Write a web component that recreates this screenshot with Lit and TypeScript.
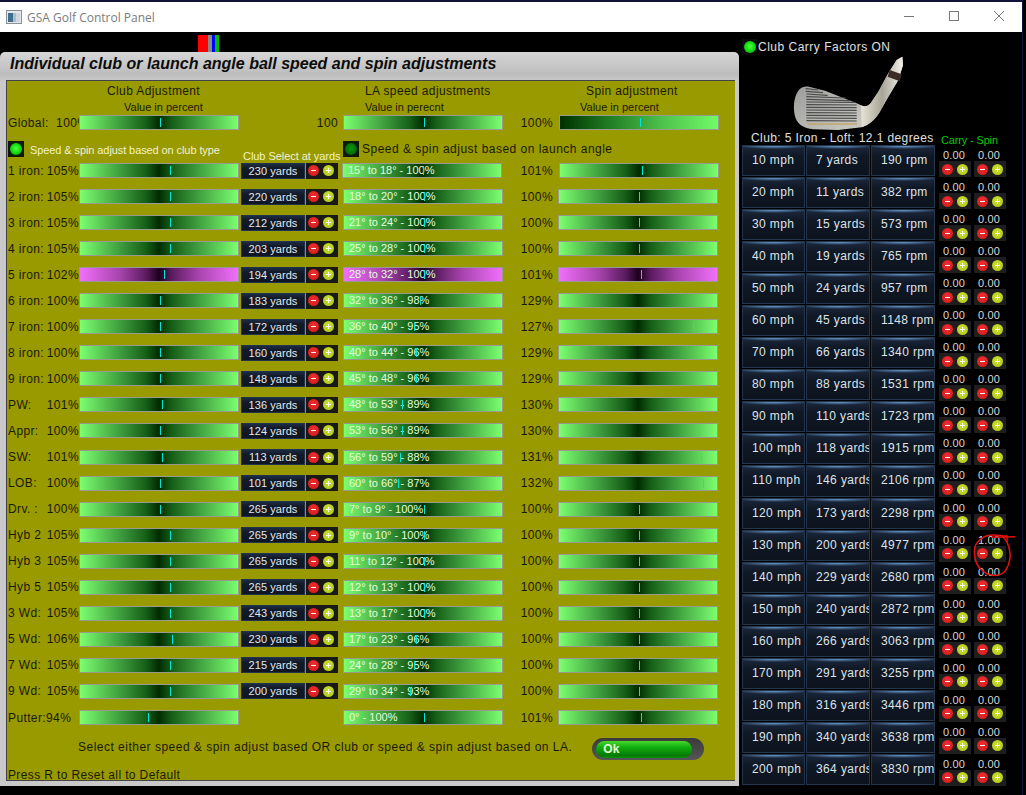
import { LitElement, html, css, svg, nothing } from 'lit';
import { customElement } from 'lit/decorators.js';

type Row = {
  club: string;
  pct: number;
  yards?: number;
  la: string;
  laPct: number;
  spin: number;
};

const ROWS: Row[] = [
  { club: '1 iron:', pct: 105, yards: 230, la: '15° to 18°', laPct: 100, spin: 101 },
  { club: '2 iron:', pct: 105, yards: 220, la: '18° to 20°', laPct: 100, spin: 100 },
  { club: '3 iron:', pct: 105, yards: 212, la: '21° to 24°', laPct: 100, spin: 100 },
  { club: '4 iron:', pct: 105, yards: 203, la: '25° to 28°', laPct: 100, spin: 100 },
  { club: '5 iron:', pct: 102, yards: 194, la: '28° to 32°', laPct: 100, spin: 101 },
  { club: '6 iron:', pct: 100, yards: 183, la: '32° to 36°', laPct: 98, spin: 129 },
  { club: '7 iron:', pct: 100, yards: 172, la: '36° to 40°', laPct: 95, spin: 127 },
  { club: '8 iron:', pct: 100, yards: 160, la: '40° to 44°', laPct: 96, spin: 129 },
  { club: '9 iron:', pct: 100, yards: 148, la: '45° to 48°', laPct: 96, spin: 129 },
  { club: 'PW:', pct: 101, yards: 136, la: '48° to 53°', laPct: 89, spin: 130 },
  { club: 'Appr:', pct: 100, yards: 124, la: '53° to 56°', laPct: 89, spin: 130 },
  { club: 'SW:', pct: 101, yards: 113, la: '56° to 59°', laPct: 88, spin: 131 },
  { club: 'LOB:', pct: 100, yards: 101, la: '60° to 66°', laPct: 87, spin: 132 },
  { club: 'Drv. :', pct: 100, yards: 265, la: '7° to 9°', laPct: 100, spin: 100 },
  { club: 'Hyb 2', pct: 105, yards: 265, la: '9° to 10°', laPct: 100, spin: 100 },
  { club: 'Hyb 3', pct: 105, yards: 265, la: '11° to 12°', laPct: 100, spin: 100 },
  { club: 'Hyb 5', pct: 105, yards: 265, la: '12° to 13°', laPct: 100, spin: 100 },
  { club: '3 Wd:', pct: 105, yards: 243, la: '13° to 17°', laPct: 100, spin: 100 },
  { club: '5 Wd:', pct: 106, yards: 230, la: '17° to 23°', laPct: 96, spin: 100 },
  { club: '7 Wd:', pct: 105, yards: 215, la: '24° to 28°', laPct: 95, spin: 100 },
  { club: '9 Wd:', pct: 105, yards: 200, la: '29° to 34°', laPct: 93, spin: 100 },
  { club: 'Putter:', pct: 94, la: '0°', laPct: 100, spin: 101 },
];

const SPEEDS: [number, number, number][] = [
  [10, 7, 190], [20, 11, 382], [30, 15, 573], [40, 19, 765], [50, 24, 957],
  [60, 45, 1148], [70, 66, 1340], [80, 88, 1531], [90, 110, 1723], [100, 118, 1915],
  [110, 146, 2106], [120, 173, 2298], [130, 200, 4977], [140, 229, 2680], [150, 240, 2872],
  [160, 266, 3063], [170, 291, 3255], [180, 316, 3446], [190, 340, 3638], [200, 364, 3830],
];

const SELECTED = 4;

@customElement('app-root')
export class AppRoot extends LitElement {
  static styles = css`
    :host {
      display: block;
      width: 1026px;
      height: 795px;
      background: #000;
      overflow: hidden;
      font-family: 'Liberation Sans', Arial, sans-serif;
      font-size: 12px;
      letter-spacing: 0.38px;
      color: #1a1a00;
      position: relative;
    }

    .window {
      width: 1022px;
      height: 793px;
      border-top: 2px solid #12123a;
      border-right: 1px solid #12123a;
    }

    /* Title bar */
    .titlebar {
      height: 30px;
      background: #fff;
      display: flex;
      align-items: center;
      padding-left: 6px;
      letter-spacing: 0;
    }
    .titlebar__icon { width: 16px; height: 14px; margin-right: 5px; }
    .titlebar__text {
      flex: 1;
      font-family: 'Open Sans', sans-serif;
      font-size: 12px;
      color: #7b7b7b;
    }
    .titlebar__btns { display: flex; margin: -2px 16px 0 0; gap: 31px; }
    .titlebar__btns svg { width: 14px; height: 14px; display: block; }

    .main { display: flex; align-items: flex-start; }

    /* Left side */
    .left { width: 739px; padding-top: 3px; }
    .marks { display: flex; height: 17px; margin-left: 198px; }
    .marks i { display: block; height: 100%; }

    .panel {
      height: 734px;
      box-sizing: border-box;
      padding: 0 4px 5px 6px;
      border-radius: 5px 5px 0 0;
      background: linear-gradient(#d6d6d6, #bdbdbd 3%, #c9c9c9 4%, #c9c9c9);
      display: flex;
      flex-direction: column;
    }
    .panel__title {
      height: 28px;
      flex: none;
      padding: 2px 0 0 4px;
      box-sizing: border-box;
      line-height: 20px;
      font-size: 16px;
      font-weight: bold;
      font-style: italic;
      letter-spacing: 0;
      color: #0c0c0c;
    }
    .olive {
      flex: 1;
      background: #999900;
      border-top: 1px solid #444;
      border-left: 1px solid #444;
      border-bottom: 1px solid #444;
      box-sizing: border-box;
      padding-left: 1px;
      overflow: hidden;
      position: relative;
    }

    .heads {
      display: grid;
      grid-template-columns: 71px 227px 32px 5px 160px 55px 160px;
      height: 34px;
      line-height: 14px;
    }
    .head { margin-top: 3px; white-space: nowrap; }
    .head small { display: block; font-size: 11px; letter-spacing: 0; margin-top: 2px; }
    .head--club { grid-column: 1 / span 2; padding-left: 99px; }
    .head--club small { margin-left: 17px; }
    .head--la { grid-column: 3 / span 3; padding-left: 59px; }
    .head--spin { grid-column: 6 / span 2; padding-left: 83px; }
    .head--spin small { margin-left: -6px; }

    .rows {
      display: grid;
      grid-template-columns: 71px 160px 67px 37px 160px 55px 160px;
      grid-auto-rows: 26.05px;
      align-items: center;
    }
    .global { height: 15px; grid-auto-rows: 15px; }

    .name { white-space: nowrap; overflow: hidden; }
    .name--split { display: flex; justify-content: space-between; }
    .val { text-align: right; padding-right: 5px; }
    .val--la-global { grid-column: 3 / span 2; padding-right: 5px; text-align: right; }

    .slider {
      width: 160px;
      height: 15px;
      box-sizing: border-box;
      border: 1px solid #9a9a8c;
      position: relative;
      overflow: hidden;
      background: linear-gradient(90deg, #7cff70, #3f9f3f 25%, #155e17 42%, #002c00 50%, #155e17 58%, #3f9f3f 75%, #7cff70);
    }
    .slider--one-way {
      background: linear-gradient(90deg, #003000, #1f7a22 30%, #4ec24c 65%, #72fb68);
    }
    .slider--active {
      background: linear-gradient(90deg, #f070fa, #a844ae 25%, #5a1c5e 42%, #1c001e 50%, #5a1c5e 58%, #a844ae 75%, #f070fa);
    }
    .slider--la-first { margin-left: -1px; }
    .slider--spin-first { margin-left: 1px; }
    .slider__tick {
      position: absolute;
      top: 2px;
      width: 1px;
      height: 9px;
      background: #00e6dc;
    }
    .slider__text {
      position: absolute;
      left: 5px;
      top: 0;
      line-height: 13px;
      font-size: 11px;
      letter-spacing: 0;
      color: #e4ffdc;
      white-space: nowrap;
    }

    .led-row {
      display: grid;
      grid-template-columns: 16px 6px 213px 100px 16px 3px 1fr;
      height: 16.5px;
      margin-top: 11px;
    }
    .led {
      width: 16px;
      height: 16px;
      background: #0c1a0c;
      display: flex;
      align-items: center;
      justify-content: center;
    }
    .led i {
      display: block;
      width: 12px;
      height: 12px;
      border-radius: 50%;
      background: radial-gradient(circle at 50% 45%, #4cff3c, #10d810 55%, #067a06);
    }
    .led--off i { background: radial-gradient(circle at 50% 45%, #0a9a0a, #047004 60%, #034003); }
    .led-row__white {
      grid-column: 3;
      font-size: 11px;
      color: #f2f2cc;
      line-height: 18px;
      letter-spacing: -0.09px;
      white-space: nowrap;
    }
    .led-row__sel {
      font-size: 11px;
      color: #f2f2cc;
      line-height: 14px;
      margin-top: 8px;
      white-space: nowrap;
      letter-spacing: -0.05px;
    }
    .led-row__dark { line-height: 16px; white-space: nowrap; letter-spacing: 0.48px; }

    .yards {
      width: 64px;
      height: 16px;
      margin-left: 2px;
      box-sizing: border-box;
      border: 1px solid #1f3350;
      background: linear-gradient(#1d2c44, #131a28 30%, #0f1622);
      color: #e4e8ee;
      font-size: 11px;
      letter-spacing: 0.05px;
      line-height: 14px;
      text-align: center;
      white-space: nowrap;
    }

    .pm {
      width: 32px;
      height: 16px;
      background: #191919;
      display: flex;
      align-items: center;
      padding-left: 2px;
      box-sizing: border-box;
      gap: 4px;
    }
    .pm i {
      display: block;
      width: 11px;
      height: 11px;
      border-radius: 50%;
      position: relative;
      background: radial-gradient(circle at 50% 40%, #f03030, #cc1616);
    }
    .pm i::before {
      content: '';
      position: absolute;
      left: 3px;
      top: 5px;
      width: 5px;
      height: 1px;
      background: #fff;
    }
    .pm i.plus { background: radial-gradient(circle at 50% 40%, #cfe034, #a9c414); }
    .pm i.plus::after {
      content: '';
      position: absolute;
      left: 5px;
      top: 3px;
      width: 1px;
      height: 5px;
      background: #fff;
    }

    .notice {
      display: flex;
      align-items: flex-start;
      margin: 4px 0 0 70px;
      height: 24px;
      line-height: 24px;
      white-space: nowrap;
      letter-spacing: 0.49px;
    }
    .ok {
      width: 112px;
      height: 22px;
      margin: 3px 0 0 20px;
      border-radius: 11px;
      background: linear-gradient(#3a3a3a, #555);
      box-sizing: border-box;
      padding: 3px 12px 2px 4px;
      flex: none;
    }
    .ok span {
      display: block;
      height: 100%;
      border-radius: 9px;
      background: linear-gradient(#4ad82c, #11b010 35%, #057a05 85%, #0a8f0a);
      color: #e8f4d8;
      font-size: 12px;
      font-weight: bold;
      letter-spacing: 0;
      line-height: 17px;
      padding-left: 7px;
    }
    .reset { margin-top: 9px; white-space: nowrap; line-height: 14px; letter-spacing: 0.37px; }

    /* Right side */
    .right { margin-left: 3px; padding-top: 7px; width: 280px; color: #e0e0e0; }
    .carry-on { display: flex; align-items: center; height: 16px; line-height: 16px; letter-spacing: 0.5px; }
    .carry-on .led { background: #0c0c0c; width: 15px; margin-right: 1px; }
    .club-pic { display: block; width: 130px; height: 90px; margin: -5px 0 -9px 43px; }
    .lower { display: flex; }
    .lower__table { width: 193px; margin-right: 4px; }
    .caption {
      height: 14px;
      line-height: 14px;
      white-space: nowrap;
      margin-left: 9px;
      letter-spacing: 0.4px;
    }
    .table {
      display: grid;
      grid-template-columns: 63px 64px 64px;
      grid-auto-rows: 31.05px;
      column-gap: 1px;
      row-gap: 1px;
    }
    .cell {
      box-sizing: border-box;
      border: 1px solid #24364e;
      background:
        radial-gradient(ellipse 60% 3px at 50% 0, #6a9ccf, transparent),
        linear-gradient(#1a273c, #101825 35%, #0c131d);
      padding-left: 9px;
      line-height: 28px;
      color: #dfe4ea;
      white-space: nowrap;
      overflow: hidden;
    }
    .cs {
      color: #0ac80a;
      font-size: 11px;
      height: 18px;
      line-height: 18px;
      margin-left: 2px;
      letter-spacing: -0.15px;
    }
    .adj { display: grid; grid-template-columns: 32px 32px; column-gap: 3px; grid-auto-rows: 32.05px; }
    .adj__item { text-align: center; }
    .adj__val { display: block; height: 12px; line-height: 12px; font-size: 11px; letter-spacing: 0.2px; color: #d8d8d8; padding-right: 2px; }
    .adj .pm { background: #1e1e1e; padding-left: 3px; }

    .scribble { position: absolute; left: 960px; top: 525px; width: 66px; height: 80px; pointer-events: none; }
  `;

  private slider(v: number, cls = '', text = '') {
    return html`<div class="slider ${cls}">
      ${text ? html`<span class="slider__text">${text}</span>` : nothing}
      <i class="slider__tick" style="left:${80 + (v - 100) * 2}px"></i>
    </div>`;
  }

  private pm() {
    return html`<div class="pm"><i></i><i class="plus"></i></div>`;
  }

  private clubPic() {
    const grooves = [116, 124, 132, 140, 148, 156, 164, 172, 180, 188, 196, 204, 212];
    return html`<svg class="club-pic" viewBox="0 0 390 270">
      <defs>
        <linearGradient id="head" x1="0" y1="0" x2="1" y2="1">
          <stop offset="0" stop-color="#8a8a88"></stop>
          <stop offset="0.5" stop-color="#b5b5b0"></stop>
          <stop offset="1" stop-color="#d8d6cc"></stop>
        </linearGradient>
        <linearGradient id="shaft" x1="0" y1="0" x2="1" y2="0">
          <stop offset="0" stop-color="#e8e4d8"></stop>
          <stop offset="0.5" stop-color="#a8a498"></stop>
          <stop offset="1" stop-color="#f4f2ea"></stop>
        </linearGradient>
      </defs>
      <path fill="url(#head)" d="M40 122 C48 112 58 108 72 110 L120 122 L215 160 L228 166 C240 172 250 168 258 158 L280 125 L310 70 L335 30 L352 20 L354 45 L340 90 L310 140 L282 190 C268 212 250 226 230 232 L160 240 L85 238 C60 236 40 226 32 205 C24 180 24 145 40 122 Z"></path>
      <path fill="url(#shaft)" d="M228 166 C240 172 250 168 258 158 L280 125 L310 70 L335 30 L352 20 L354 45 L340 90 L310 140 L282 190 C268 212 250 226 230 232 Z"></path>
      <path fill="#3c2c28" d="M314 60 L350 73 L344 94 L308 80 Z"></path>
      ${grooves.map((y, i) => {
        const x1 = 62 + (i < 2 ? 0 : 2);
        const x2 = Math.min(215, 100 + i * 14 + (i > 2 ? 40 : 0));
        return svg`<line x1=${x1} x2=${x2} y1=${y} y2=${y + (i < 5 ? 4 : 1)} stroke="#4a4a4a" stroke-width="3.4"></line>`;
      })}
      <line x1="70" y1="222" x2="216" y2="222" stroke="#c89a48" stroke-width="3"></line>
    </svg>`;
  }

  render() {
    return html`
      <div class="window">
        <div class="titlebar">
          <svg class="titlebar__icon" viewBox="0 0 16 14">
            <rect x="0.5" y="0.5" width="15" height="13" fill="#e4e8ec" stroke="#8a9098"></rect>
            <rect x="2" y="3" width="5" height="9" fill="#3f6f8c"></rect>
            <rect x="7" y="3" width="3" height="9" fill="#a8c0cc"></rect>
            <rect x="10" y="3" width="4" height="9" fill="#d2d6da"></rect>
          </svg>
          <span class="titlebar__text">GSA Golf Control Panel</span>
          <div class="titlebar__btns">
            <svg viewBox="0 0 14 14"><path d="M2 7.5H12" stroke="#777" fill="none"></path></svg>
            <svg viewBox="0 0 14 14"><rect x="2.5" y="2.5" width="9" height="9" stroke="#777" fill="none"></rect></svg>
            <svg viewBox="0 0 14 14"><path d="M2 2L12 12M12 2L2 12" stroke="#777" fill="none"></path></svg>
          </div>
        </div>

        <div class="main">
          <div class="left">
            <div class="marks">
              <i style="width:10px;background:#f00"></i>
              <i style="width:4px;background:#888"></i>
              <i style="width:3px;background:#00f"></i>
              <i style="width:4px;background:#0b0"></i>
            </div>
            <div class="panel">
              <div class="panel__title">Individual club or launch angle ball speed and spin adjustments</div>
              <div class="olive">
                <div class="heads">
                  <div class="head head--club">Club Adjustment<small>Value in percent</small></div>
                  <div class="head head--la">LA speed adjustments<small>Value in perecnt</small></div>
                  <div class="head head--spin">Spin adjustment<small>Value in percent</small></div>
                </div>

                <div class="rows global">
                  <div class="name">Global:&nbsp; 100%</div>
                  ${this.slider(100)}
                  <div class="val val--la-global">100</div>
                  ${this.slider(100)}
                  <div class="val">100%</div>
                  ${this.slider(100, 'slider--one-way slider--spin-first')}
                </div>

                <div class="led-row">
                  <div class="led"><i></i></div>
                  <div></div>
                  <div class="led-row__white">Speed &amp; spin adjust based on club type</div>
                  <div class="led-row__sel">Club Select at yards</div>
                  <div class="led led--off"><i></i></div>
                  <div></div>
                  <div class="led-row__dark">Speed &amp; spin adjust based on launch angle</div>
                </div>

                <div class="rows">
                  ${ROWS.map((r, i) => {
                    const on = i === SELECTED ? 'slider--active' : '';
                    const text = `${r.la} - ${r.laPct}%`;
                    return html`
                      ${r.club === 'Putter:'
                        ? html`<div class="name">${r.club}${r.pct}%</div>`
                        : html`<div class="name name--split"><span>${r.club}</span><span>${r.pct}%</span></div>`}
                      ${this.slider(r.pct, on)}
                      ${r.yards
                        ? html`<div class="yards">${r.yards} yards</div>${this.pm()}`
                        : html`<div></div><div></div>`}
                      ${this.slider(r.laPct, `${on} ${i === 0 ? 'slider--la-first' : ''}`, text)}
                      <div class="val">${r.spin}%</div>
                      ${this.slider(r.spin, `${on} ${i === 0 ? 'slider--spin-first' : ''}`)}
                    `;
                  })}
                </div>

                <div class="notice">
                  <span>Select either speed &amp; spin adjust based OR club or speed &amp; spin adjust based on LA.</span>
                  <div class="ok"><span>Ok</span></div>
                </div>
                <div class="reset">Press R to Reset all to Default</div>
              </div>
            </div>
          </div>

          <div class="right">
            <div class="carry-on"><div class="led"><i></i></div>Club Carry Factors ON</div>
            ${this.clubPic()}
            <div class="lower">
              <div class="lower__table">
                <div class="caption">Club: 5 Iron - Loft: 12.1 degrees</div>
                <div class="table">
                  ${SPEEDS.map(
                    ([mph, yds, rpm]) => html`
                      <div class="cell">${mph} mph</div>
                      <div class="cell">${yds} yards</div>
                      <div class="cell">${rpm} rpm</div>
                    `
                  )}
                </div>
              </div>
              <div>
                <div class="cs">Carry - Spin</div>
                <div class="adj">
                  ${SPEEDS.map(
                    ([mph]) => html`
                      <div class="adj__item"><span class="adj__val">0.00</span>${this.pm()}</div>
                      <div class="adj__item"><span class="adj__val">${mph === 130 ? '1.00' : '0.00'}</span>${this.pm()}</div>
                    `
                  )}
                </div>
              </div>
            </div>
          </div>
        </div>
      </div>

      <svg class="scribble" viewBox="0 0 66 80" fill="none" stroke="#e01010" stroke-width="1.5">
        <path d="M46.7 11.7 C42 10 37 10 33 10 C28 10 25 11 21.7 13.3 C18 16 16 18 15 21.7 C14 26 14 29 15 33 C16 38 18 42 21.7 45 C25 48 28 50 31.7 50 C36 51 40 50 43 48 C46 46 47 43 48.3 40 C50 35 50.5 32 50 28 C49.5 23 48.5 20 46.7 16.7 C45 14 43 12 41.7 11"></path>
        <path d="M31.7 12.3 L55 11.7 M46.7 10 L47.3 16.7"></path>
      </svg>
    `;
  }
}
